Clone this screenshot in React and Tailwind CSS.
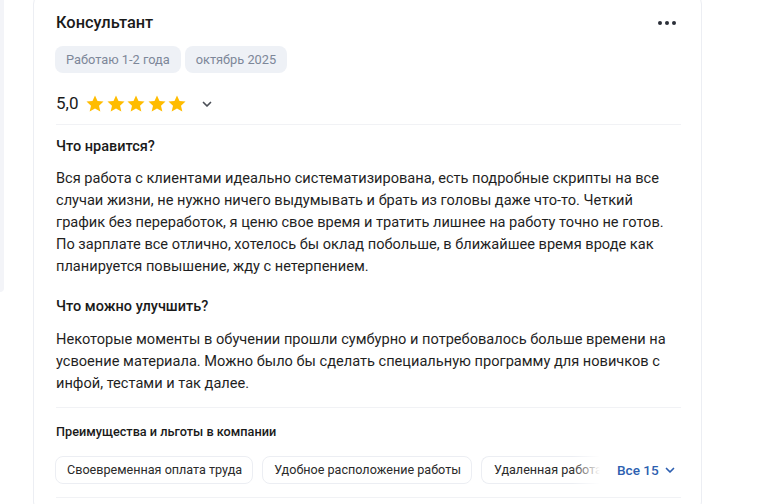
import React from 'react';

const Star = () => (
  <svg width="20" height="20" viewBox="0 0 24 24" className="fill-[#ffbc00]">
    <path d="M12 1.8l3 6.6 7.2.7-5.4 4.9 1.6 7.1-6.4-3.7-6.4 3.7 1.6-7.1-5.4-4.9 7.2-.7z" />
  </svg>
);

const Chevron = ({ className }) => (
  <svg width="12" height="12" viewBox="0 0 12 12" className={className}>
    <path d="M2.5 4.5L6 8l3.5-3.5" fill="none" stroke="currentColor" strokeWidth="1.7" strokeLinecap="round" strokeLinejoin="round" />
  </svg>
);

const tags = ['Работаю 1-2 года', 'октябрь 2025'];
const perks = ['Своевременная оплата труда', 'Удобное расположение работы', 'Удаленная работа'];

const likes = [
  'Вся работа с клиентами идеально систематизирована, есть подробные скрипты на все',
  'случаи жизни, не нужно ничего выдумывать и брать из головы даже что-то. Четкий',
  'график без переработок, я ценю свое время и тратить лишнее на работу точно не готов.',
  'По зарплате все отлично, хотелось бы оклад побольше, в ближайшее время вроде как',
  'планируется повышение, жду с нетерпением.',
];

const improve = [
  'Некоторые моменты в обучении прошли сумбурно и потребовалось больше времени на',
  'усвоение материала. Можно было бы сделать специальную программу для новичков с',
  'инфой, тестами и так далее.',
];

const Lines = ({ lines, className }) => (
  <p className={className}>
    {lines.map((l) => (
      <span key={l} className="block whitespace-nowrap">
        {l}
      </span>
    ))}
  </p>
);

const App = () => {
  return (
    <div
      className="relative w-[768px] h-[504px] overflow-hidden bg-white text-[#1f1f1f]"
      style={{ fontFamily: 'Roboto, "Liberation Sans", sans-serif' }}
    >
      <div className="absolute left-0 top-0 w-[4px] h-[292px] bg-[#f3f4f8] rounded-br-xl" />

      <div className="ml-[33px] mt-[-12px] w-[669px] bg-white border border-[#eceef3] rounded-2xl pt-[22px] pl-[22px] pr-[20px]">
        {/* header */}
        <div className="flex items-center justify-between h-[24px]">
          <h2 className="text-[16.4px] font-medium text-[#1a1a1a] leading-[24px]">Консультант</h2>
          <div className="flex gap-[3px] mr-[5px]">
            <span className="w-[4px] h-[4px] rounded-full bg-[#2b2f38]" />
            <span className="w-[4px] h-[4px] rounded-full bg-[#2b2f38]" />
            <span className="w-[4px] h-[4px] rounded-full bg-[#2b2f38]" />
          </div>
        </div>

        <div className="flex gap-[4px] mt-[11px] -ml-[1px]">
          {tags.map((t) => (
            <span key={t} className="h-[27px] px-[11px] flex items-center rounded-lg bg-[#eef1f6] text-[12.8px] text-[#7d8799]">
              {t}
            </span>
          ))}
        </div>

        {/* rating */}
        <div className="flex items-center h-[24px] mt-[19px]">
          <span className="text-[17px] text-[#1a1a1a] mr-[7px]">5,0</span>
          <div className="flex gap-[0.5px]">
            {[0, 1, 2, 3, 4].map((i) => (
              <Star key={i} />
            ))}
          </div>
          <Chevron className="ml-[14px] text-[#4b4f57]" />
        </div>

        <div className="mt-[8px] border-t border-[#f1f2f5] pt-[12px]">
          <h3 className="text-[14.5px] font-medium leading-[20px] text-[#1a1a1a]">Что нравится?</h3>
          <Lines lines={likes} className="mt-[10px] text-[14.6px] leading-[22px]" />

          <h3 className="mt-[20px] text-[14.5px] font-medium leading-[20px] text-[#1a1a1a]">Что можно улучшить?</h3>
          <Lines lines={improve} className="mt-[11px] text-[14.6px] leading-[22px]" />
        </div>

        <div className="mt-[13px] border-t border-[#f1f2f5] pt-[15px]">
          <h4 className="text-[12.7px] font-medium leading-[18px] text-[#1a1a1a]">Преимущества и льготы в компании</h4>
          <div className="flex items-center mt-[15px] -ml-[1px]">
            <div className="relative w-[545px] h-[28px] overflow-hidden">
              <div className="flex gap-[9px] whitespace-nowrap">
                {perks.map((p, i) => (
                  <span
                    key={p}
                    className={
                      i === 2
                        ? 'h-[28px] w-[125px] pl-[12px] flex items-center rounded-l-lg border-y border-l border-[#eceef3] text-[12.6px] text-[#2a2a2a] shrink-0 overflow-hidden'
                        : 'h-[28px] pl-[11px] pr-[10px] flex items-center rounded-lg border border-[#eceef3] text-[12.6px] text-[#2a2a2a] shrink-0'
                    }
                  >
                    {i === 2 ? <span className="block w-[112px] overflow-hidden">{p}</span> : p}
                  </span>
                ))}
              </div>
              <div className="absolute right-0 top-0 h-full w-[28px] bg-gradient-to-r from-white/0 to-white" />
            </div>
            <button className="ml-[17px] flex items-center gap-[5px] text-[13.6px] font-medium text-[#2d5fb0]">
              Все 15
              <Chevron className="text-[#2d5fb0]" />
            </button>
          </div>
          <div className="mt-[13px] border-t border-[#f1f2f5] h-[20px]" />
        </div>
      </div>
    </div>
  );
};

export default App;
